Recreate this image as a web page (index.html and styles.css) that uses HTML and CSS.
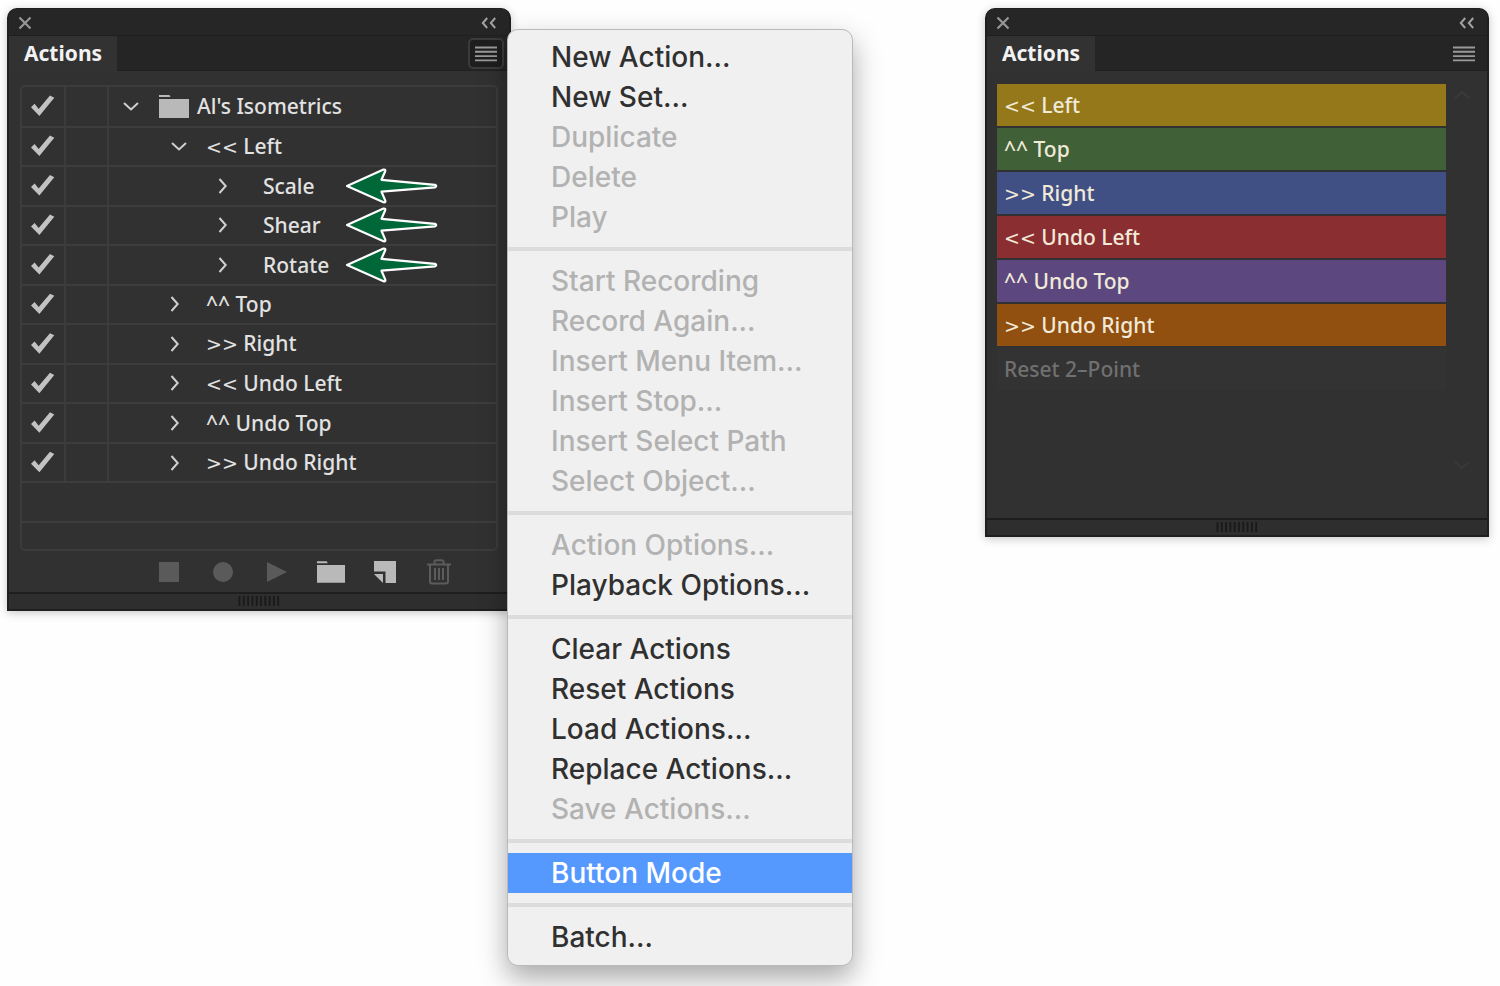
FILE: index.html
```html
<!DOCTYPE html>
<html lang="en">
<head>
<meta charset="utf-8">
<title>Actions</title>
<link rel="stylesheet" href="styles.css">
</head>
<body>
<svg class="defs" aria-hidden="true">
  <symbol id="close" viewBox="0 0 14 14"><path d="M1.5 1.5l11 11M12.5 1.5l-11 11" fill="none" stroke="#969696" stroke-width="2.2"/></symbol>
  <symbol id="collapse" viewBox="0 0 16 12"><path d="M6.2 1L1.8 6l4.400 5M14.200 1L9.800 6l4.400 5" fill="none" stroke="#a2a2a2" stroke-width="2"/></symbol>
  <symbol id="lines" viewBox="0 0 22 16"><path d="M0 1.500h22M0 5.800h22M0 10.100h22M0 14.400h22" fill="none" stroke="#9a9a9a" stroke-width="1.900"/></symbol>
  <symbol id="down" viewBox="0 0 16 16"><path d="M1 5l7 6.500L15 5" fill="none" stroke="#d0d0d0" stroke-width="2"/></symbol>
  <symbol id="right" viewBox="0 0 16 16"><path d="M4.500 1l6.200 7-6.200 7" fill="none" stroke="#d0d0d0" stroke-width="2"/></symbol>
  <symbol id="folder" viewBox="0 0 30 23"><path d="M0 0h10.500l1 2H0zM0 4h30v19H0z" fill="#b9b9b9"/></symbol>
  <symbol id="arrow" viewBox="0 0 94 38"><path d="M2 19L38.500 2.600q2.400-.4 1.700 1.600L36.500 12.800 90 17.800q2.500 1.200 0 2.600L36.500 24.700 40.300 33.600q.5 2.400-1.800 1.600z" fill="#006838" stroke="#fff" stroke-width="2.200" stroke-linejoin="round"/></symbol>
  <symbol id="grip" viewBox="0 0 42 10"><path d="M1.500 0v10M5.800 0v10M10.100 0v10M14.400 0v10M18.700 0v10M23 0v10M27.300 0v10M31.600 0v10M35.900 0v10M40.200 0v10" stroke="#191919" stroke-width="1.700"/></symbol>
</svg>
<main class="desk">
  <div class="left">
    <section class="panel" aria-label="Actions list">
      <header class="titlebar">
        <button class="plain" aria-label="Close"><svg width="14" height="14"><use href="#close"/></svg></button>
        <button class="plain" aria-label="Collapse"><svg width="16" height="12"><use href="#collapse"/></svg></button>
      </header>
      <div class="tabs">
        <h2 class="tab">Actions</h2>
        <button class="menu-button open" aria-label="Panel menu" aria-expanded="true"><svg width="22" height="16"><use href="#lines"/></svg></button>
      </div>
      <div class="list">
        <table class="tree">
          <tbody>
            <tr><td class="tick"><input type="checkbox" checked aria-label="Toggle Al's Isometrics"></td><td class="dialog"></td><td class="name root"><div class="entry"><button class="plain" aria-label="Collapse set"><svg width="16" height="16"><use href="#down"/></svg></button><svg class="folder" width="30" height="23"><use href="#folder"/></svg><span>Al's Isometrics</span></div></td></tr>
            <tr><td class="tick"><input type="checkbox" checked aria-label="Toggle Left"></td><td class="dialog"></td><td class="name action expanded"><div class="entry"><button class="plain" aria-label="Collapse Left"><svg width="16" height="16"><use href="#down"/></svg></button><span><span class="mark">&lt;&lt;</span> Left</span></div></td></tr>
            <tr><td class="tick"><input type="checkbox" checked aria-label="Toggle Scale"></td><td class="dialog"></td><td class="name step"><div class="entry"><button class="plain" aria-label="Expand Scale"><svg width="16" height="16"><use href="#right"/></svg></button><span>Scale</span><svg class="pointer" width="94" height="38"><use href="#arrow"/></svg></div></td></tr>
            <tr><td class="tick"><input type="checkbox" checked aria-label="Toggle Shear"></td><td class="dialog"></td><td class="name step"><div class="entry"><button class="plain" aria-label="Expand Shear"><svg width="16" height="16"><use href="#right"/></svg></button><span>Shear</span><svg class="pointer" width="94" height="38"><use href="#arrow"/></svg></div></td></tr>
            <tr><td class="tick"><input type="checkbox" checked aria-label="Toggle Rotate"></td><td class="dialog"></td><td class="name step"><div class="entry"><button class="plain" aria-label="Expand Rotate"><svg width="16" height="16"><use href="#right"/></svg></button><span>Rotate</span><svg class="pointer" width="94" height="38"><use href="#arrow"/></svg></div></td></tr>
            <tr><td class="tick"><input type="checkbox" checked aria-label="Toggle Top"></td><td class="dialog"></td><td class="name action"><div class="entry"><button class="plain" aria-label="Expand Top"><svg width="16" height="16"><use href="#right"/></svg></button><span>^^ Top</span></div></td></tr>
            <tr><td class="tick"><input type="checkbox" checked aria-label="Toggle Right"></td><td class="dialog"></td><td class="name action"><div class="entry"><button class="plain" aria-label="Expand Right"><svg width="16" height="16"><use href="#right"/></svg></button><span><span class="mark">&gt;&gt;</span> Right</span></div></td></tr>
            <tr><td class="tick"><input type="checkbox" checked aria-label="Toggle Undo Left"></td><td class="dialog"></td><td class="name action"><div class="entry"><button class="plain" aria-label="Expand Undo Left"><svg width="16" height="16"><use href="#right"/></svg></button><span><span class="mark">&lt;&lt;</span> Undo Left</span></div></td></tr>
            <tr><td class="tick"><input type="checkbox" checked aria-label="Toggle Undo Top"></td><td class="dialog"></td><td class="name action"><div class="entry"><button class="plain" aria-label="Expand Undo Top"><svg width="16" height="16"><use href="#right"/></svg></button><span>^^ Undo Top</span></div></td></tr>
            <tr><td class="tick"><input type="checkbox" checked aria-label="Toggle Undo Right"></td><td class="dialog"></td><td class="name action"><div class="entry"><button class="plain" aria-label="Expand Undo Right"><svg width="16" height="16"><use href="#right"/></svg></button><span><span class="mark">&gt;&gt;</span> Undo Right</span></div></td></tr>
            <tr><td colspan="3"></td></tr>
          </tbody>
        </table>
      </div>
      <div class="tools">
        <button class="plain" aria-label="Stop" disabled><svg width="20" height="20"><path d="M0 0h20v20H0z" fill="#5a5a5a"/></svg></button>
        <button class="plain" aria-label="Record" disabled><svg width="20" height="20"><circle cx="10" cy="10" r="10" fill="#5a5a5a"/></svg></button>
        <button class="plain" aria-label="Play" disabled><svg width="20" height="20"><path d="M0 0l20 10L0 20z" fill="#5a5a5a"/></svg></button>
        <button class="plain" aria-label="New set"><svg width="28" height="22"><use href="#folder"/></svg></button>
        <button class="plain" aria-label="New action"><svg width="22" height="22" viewBox="0 0 22 22"><path d="M0 0h22v22H11.500V10.500H0zM0 13h9v9z" fill="#b9b9b9"/></svg></button>
        <button class="plain" aria-label="Delete action" disabled><svg width="24" height="26" viewBox="0 0 24 26"><path d="M0 5.500h24M7.500 5V3q0-1.800 2-1.800h5q2 0 2 1.800v2M3 6v16.500q0 2 2 2h14q2 0 2-2V6M8 9v12M12 9v12M16 9v12" fill="none" stroke="#5c5c5c" stroke-width="2"/></svg></button>
      </div>
      <footer class="foot"><svg width="42" height="10"><use href="#grip"/></svg></footer>
    </section>

    <div class="menu" role="menu">
      <button role="menuitem">New Action...</button>
      <button role="menuitem">New Set...</button>
      <button role="menuitem" disabled>Duplicate</button>
      <button role="menuitem" disabled>Delete</button>
      <button role="menuitem" disabled>Play</button>
      <hr>
      <button role="menuitem" disabled>Start Recording</button>
      <button role="menuitem" disabled>Record Again...</button>
      <button role="menuitem" disabled>Insert Menu Item...</button>
      <button role="menuitem" disabled>Insert Stop...</button>
      <button role="menuitem" disabled>Insert Select Path</button>
      <button role="menuitem" disabled>Select Object...</button>
      <hr>
      <button role="menuitem" disabled>Action Options...</button>
      <button role="menuitem">Playback Options...</button>
      <hr>
      <button role="menuitem">Clear Actions</button>
      <button role="menuitem">Reset Actions</button>
      <button role="menuitem">Load Actions...</button>
      <button role="menuitem">Replace Actions...</button>
      <button role="menuitem" disabled>Save Actions...</button>
      <hr>
      <button role="menuitem" class="selected">Button Mode</button>
      <hr>
      <button role="menuitem">Batch...</button>
    </div>
  </div>

  <section class="panel" aria-label="Actions in button mode">
    <header class="titlebar">
      <button class="plain" aria-label="Close"><svg width="14" height="14"><use href="#close"/></svg></button>
      <button class="plain" aria-label="Collapse"><svg width="16" height="12"><use href="#collapse"/></svg></button>
    </header>
    <div class="tabs">
      <h2 class="tab">Actions</h2>
      <button class="menu-button" aria-label="Panel menu"><svg width="22" height="16"><use href="#lines"/></svg></button>
    </div>
    <div class="button-mode">
      <div class="buttons">
        <button class="yellow"><span class="mark">&lt;&lt;</span> Left</button>
        <button class="green">^^ Top</button>
        <button class="blue"><span class="mark">&gt;&gt;</span> Right</button>
        <button class="red"><span class="mark">&lt;&lt;</span> Undo Left</button>
        <button class="violet">^^ Undo Top</button>
        <button class="orange"><span class="mark">&gt;&gt;</span> Undo Right</button>
        <button class="off" disabled>Reset 2–Point</button>
      </div>
      <div class="scroll" aria-hidden="true">
        <svg width="16" height="10"><path d="M1 8l7-6 7 6" fill="none" stroke="#3a3a3a" stroke-width="2"/></svg>
        <svg width="16" height="10"><path d="M1 2l7 6 7-6" fill="none" stroke="#393939" stroke-width="2"/></svg>
      </div>
    </div>
    <footer class="foot"><svg width="42" height="10"><use href="#grip"/></svg></footer>
  </section>
</main>
</body>
</html>
```
FILE: styles.css
```css
* { box-sizing: border-box; }

body {
  margin: 0;
  background: #fefefe;
  font-family: "Noto Sans", "Open Sans", sans-serif;
}

button {
  margin: 0;
  padding: 0;
  border: 0;
  background: none;
  font: inherit;
  color: inherit;
  text-align: left;
}

svg { display: block; flex: none; }
.defs { position: absolute; width: 0; height: 0; }
.plain { display: flex; align-items: center; justify-content: center; }

.desk {
  display: flex;
  align-items: flex-start;
  justify-content: space-between;
  gap: 24px;
  min-height: 986px;
  padding: 8px 11px 20px 7px;
}

.left { position: relative; flex: 0 1 504px; }
.desk > .panel { flex: 0 1 504px; }

.panel {
  border: 2px solid #1f1f1f;
  border-top-width: 1px;
  border-radius: 10px 10px 0 0;
  background: #313131;
  color: #e2e2e2;
  font-size: 21px;
  font-weight: 500;
  box-shadow: 0 2px 10px rgba(0, 0, 0, 0.22);
}

.mark { font-family: "DejaVu Sans", sans-serif; font-size: 19px; }

.titlebar {
  display: flex;
  align-items: center;
  justify-content: space-between;
  height: 27px;
  padding: 2px 12px 0 9px;
  border-bottom: 1px solid #1f1f1f;
  border-radius: 8px 8px 0 0;
  background: #262626;
}

.tabs {
  display: flex;
  justify-content: space-between;
  align-items: center;
  height: 35px;
  background: #252525;
  box-shadow: inset 0 -1px #202020;
}

.tab {
  align-self: stretch;
  margin: 0;
  padding: 0 15px;
  background: #323232;
  color: #f2f2f2;
  font-size: 21px;
  font-weight: 700;
  line-height: 34px;
}

.menu-button {
  display: flex;
  align-items: center;
  justify-content: center;
  width: 36px;
  height: 31px;
  margin-right: 5px;
  border: 2px solid transparent;
  border-radius: 5px;
}

.menu-button.open { border-color: #3b3b3b; background: #1e1e1e; }

.list {
  margin: 14px 11px 0;
  padding-bottom: 26px;
  border: 2px solid #3c3c3c;
  border-radius: 5px;
}

.tree {
  width: 100%;
  height: 436px;
  border-collapse: collapse;
  table-layout: fixed;
}

.tree td { height: 38px; padding: 0; border-bottom: 2px solid #3d3d3d; }
.tree .tick, .tree .dialog { width: 43px; border-right: 2px solid #3b3b3b; }

.tick input {
  appearance: none;
  display: block;
  width: 24px;
  height: 22px;
  margin: 0 0 0 9px;
  background: #c2c2c2;
  clip-path: polygon(0 55%, 15% 39%, 40% 62%, 79% 1%, 97% 11%, 36% 94%);
  clip-path: polygon(0 55%, 15% 39%, 32% 62%, 79% 1%, 97% 11%, 35% 94%);
}

.entry {
  position: relative;
  display: flex;
  align-items: center;
  height: 30px;
  line-height: 30px;
  white-space: nowrap;
}

.root .entry { padding-left: 14px; }
.action .entry { gap: 23px; padding-left: 58px; }
.expanded .entry { gap: 19px; padding-left: 62px; }
.step .entry { gap: 32px; padding-left: 106px; }
.folder { margin: 0 8px 0 20px; }
.pointer { position: absolute; left: 236px; }

.tools {
  display: grid;
  grid-template-columns: repeat(6, 54px);
  height: 41px;
  padding-left: 133px;
}

.foot {
  display: flex;
  justify-content: center;
  height: 17px;
  padding-top: 2px;
  border-top: 2px solid #1e1e1e;
  background: #2e2e2e;
}

.menu {
  position: absolute;
  top: 21px;
  left: 500px;
  display: flex;
  flex-direction: column;
  width: 346px;
  padding: 7px 0 8px;
  overflow: hidden;
  border: 1px solid #b9b9b9;
  border-radius: 11px;
  background: #f0f0f0;
  color: #303030;
  font-family: Inter, Roboto, sans-serif;
  font-size: 28px;
  font-weight: 500;
  box-shadow: 0 12px 28px rgba(0, 0, 0, 0.34);
}

.menu button { height: 40px; padding-left: 43px; line-height: 40px; }
.menu button:disabled { color: #b2b2b2; }
.menu .selected { background: #5599ff; color: #fff; }

.menu hr {
  width: 100%;
  height: 4px;
  margin: 10px 0;
  border: 0;
  background: #dcdcdc;
}

.button-mode {
  display: flex;
  justify-content: space-between;
  min-height: 447px;
  padding: 13px 17px 43px 10px;
}

.buttons { display: flex; flex: 0 1 449px; flex-direction: column; gap: 2px; }
.buttons button { height: 42px; padding-left: 7px; line-height: 42px; color: #f1ead9; }
.buttons .yellow { background: #94781a; }
.buttons .green { background: #406138; }
.buttons .blue { background: #405084; }
.buttons .red { background: #8b2e32; }
.buttons .violet { background: #5c487f; }
.buttons .orange { background: #914f10; }
.buttons .off { background: #333333; color: #707070; }

.scroll {
  display: flex;
  flex-direction: column;
  justify-content: space-between;
  padding: 6px 0 5px;
}
```
